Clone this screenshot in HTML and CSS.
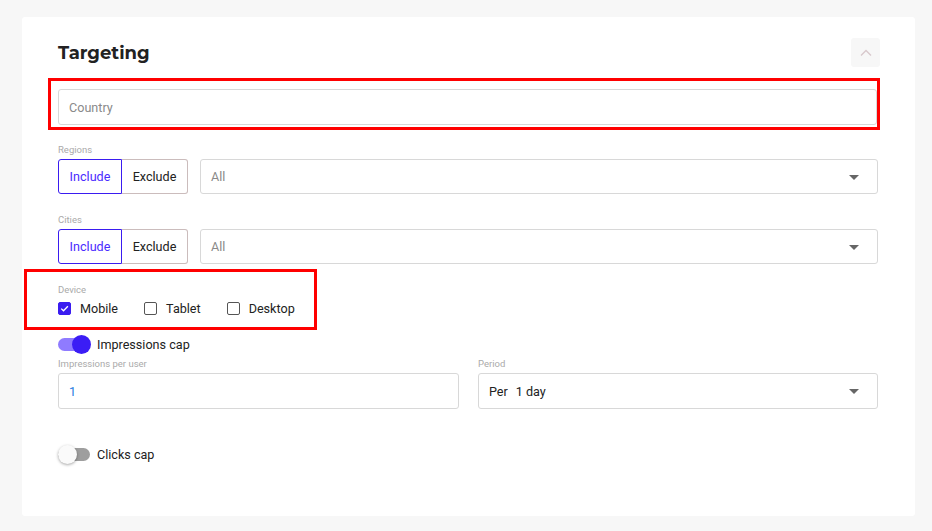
FILE: index.html
```html
<!DOCTYPE html>
<html lang="en">
<head>
    <meta charset="UTF-8">
    <title>Targeting</title>
    <link rel="stylesheet" href="styles.css">
</head>
<body>

    <!-- Targeting card -->
    <div class="card">
        <div class="card-header">
            <h2>Targeting</h2>
            <button class="collapse-btn">
                <svg width="12" height="8" viewBox="0 0 12 8"><path d="M1 6.5 L6 1.5 L11 6.5" fill="none" stroke="#d8c8cc" stroke-width="1.3"/></svg>
            </button>
        </div>

        <div class="field input-box placeholder country">Country</div>

        <div class="field-group regions">
            <div class="label">Regions</div>
            <div class="row">
                <div class="toggle-group">
                    <span class="opt active">Include</span>
                    <span class="opt">Exclude</span>
                </div>
                <div class="input-box select placeholder">All<span class="caret"></span></div>
            </div>
        </div>

        <div class="field-group cities">
            <div class="label">Cities</div>
            <div class="row">
                <div class="toggle-group">
                    <span class="opt active">Include</span>
                    <span class="opt">Exclude</span>
                </div>
                <div class="input-box select placeholder">All<span class="caret"></span></div>
            </div>
        </div>

        <div class="field-group device">
            <div class="label">Device</div>
            <div class="checks">
                <label class="check"><span class="box checked"><svg width="11" height="11" viewBox="0 0 11 11"><path d="M2.2 5.6 L4.5 7.8 L8.9 3.2" fill="none" stroke="#fff" stroke-width="1.3"/></svg></span>Mobile</label>
                <label class="check"><span class="box"></span>Tablet</label>
                <label class="check"><span class="box"></span>Desktop</label>
            </div>
        </div>

        <div class="switch-row imp">
            <span class="switch on"><span class="knob"></span></span>
            Impressions cap
        </div>

        <div class="cap-grid">
            <div>
                <div class="label">Impressions per user</div>
                <div class="input-box value-blue">1</div>
            </div>
            <div>
                <div class="label">Period</div>
                <div class="input-box select"><span class="per">Per</span>1 day<span class="caret"></span></div>
            </div>
        </div>

        <div class="switch-row clicks">
            <span class="switch"><span class="knob"></span></span>
            Clicks cap
        </div>

        <!-- highlight frames -->
        <div class="mark mark-country"></div>
        <div class="mark mark-device"></div>
    </div>

</body>
</html>
```

FILE: styles.css
```css
/* General */
body {
    margin: 0;
    padding: 17px 17px 15px 22px;
    background: #f7f7f7;
    font-family: Roboto, "Liberation Sans", sans-serif;
    font-size: 12.6px;
    color: #222;
}

/* Card */
.card {
    position: relative;
    width: 893px;
    height: 499px;
    box-sizing: border-box;
    padding: 21px 37px 0 36px;
    background: #fff;
    border-radius: 3px;
}

.card-header {
    display: flex;
    justify-content: space-between;
    align-items: center;
    height: 29px;
    margin-right: -2px;
}

h2 {
    margin: 0;
    font-family: Montserrat, "Open Sans", sans-serif;
    font-size: 18px;
    font-weight: 700;
    color: #222;
}

.collapse-btn {
    width: 29px;
    height: 29px;
    border: none;
    border-radius: 3px;
    background: #f7f7f7;
    display: flex;
    align-items: center;
    justify-content: center;
    padding: 0;
}

/* Inputs */
.input-box {
    box-sizing: border-box;
    height: 36px;
    border: 1px solid #d8d8d8;
    border-radius: 3px;
    padding: 0 10px;
    display: flex;
    align-items: center;
    color: #222;
}

.placeholder {
    color: #8a8a8a;
}

.country {
    margin-top: 22px;
    margin-right: 1px;
}

.label {
    font-size: 9.5px;
    line-height: 12px;
    color: #aaa;
    margin-bottom: 3px;
}

.regions {
    margin-top: 19px;
}

.cities {
    margin-top: 20px;
}

.row {
    display: flex;
    gap: 12px;
}

.row .input-box {
    flex: 1;
    height: 35px;
}

.toggle-group {
    display: flex;
    height: 35px;
}

.opt {
    display: flex;
    align-items: center;
    justify-content: center;
    box-sizing: border-box;
    border: 1px solid #cbbcbc;
    color: #222;
}

.opt:first-child {
    width: 64px;
    border-radius: 3px 0 0 3px;
}

.opt:last-child {
    width: 66px;
    border-left: none;
    border-radius: 0 3px 3px 0;
}

.opt.active {
    border-color: #3a1cf0;
    color: #4a2bff;
}

.select {
    position: relative;
}

.caret {
    position: absolute;
    right: 18px;
    top: 50%;
    margin-top: -2px;
    border-left: 5px solid transparent;
    border-right: 5px solid transparent;
    border-top: 5px solid #666;
}

/* Device checkboxes */
.device {
    margin-top: 20px;
}

.checks {
    display: flex;
    height: 18px;
    align-items: center;
    margin-top: 1px;
}

.check {
    display: flex;
    align-items: center;
    margin-right: 26px;
}

.box {
    width: 13px;
    height: 13px;
    box-sizing: border-box;
    border: 1px solid #555;
    border-radius: 2px;
    margin-right: 9px;
    display: flex;
    align-items: center;
    justify-content: center;
}

.box.checked {
    background: #3a1cf0;
    border-color: #3a1cf0;
}

/* Switches */
.switch-row {
    display: flex;
    align-items: center;
    height: 20px;
    color: #222;
}

.imp {
    margin-top: 17px;
}

.clicks {
    margin-top: 35px;
}

.switch {
    position: relative;
    width: 32px;
    height: 13px;
    border-radius: 7px;
    background: #9e9e9e;
    margin-right: 7px;
}

.switch.on {
    background: #8f7bff;
}

.knob {
    position: absolute;
    top: -3px;
    left: 0;
    width: 19px;
    height: 19px;
    border-radius: 50%;
    background: #fafafa;
    box-shadow: 0 1px 3px rgba(0, 0, 0, 0.35);
}

.switch.on .knob {
    left: 14px;
    background: #3b1df5;
    box-shadow: none;
}

/* Caps */
.cap-grid {
    display: grid;
    grid-template-columns: 401px 1fr;
    gap: 19px;
    margin-top: 4px;
}

.value-blue {
    color: #2a7de1;
}

.per {
    margin-right: 8px;
}

/* Highlight frames */
.mark {
    position: absolute;
    border: 3px solid #ff0000;
    box-sizing: border-box;
}

.mark-country {
    left: 26px;
    top: 61px;
    width: 832px;
    height: 52px;
}

.mark-device {
    left: 2px;
    top: 252px;
    width: 293px;
    height: 61px;
}
```
